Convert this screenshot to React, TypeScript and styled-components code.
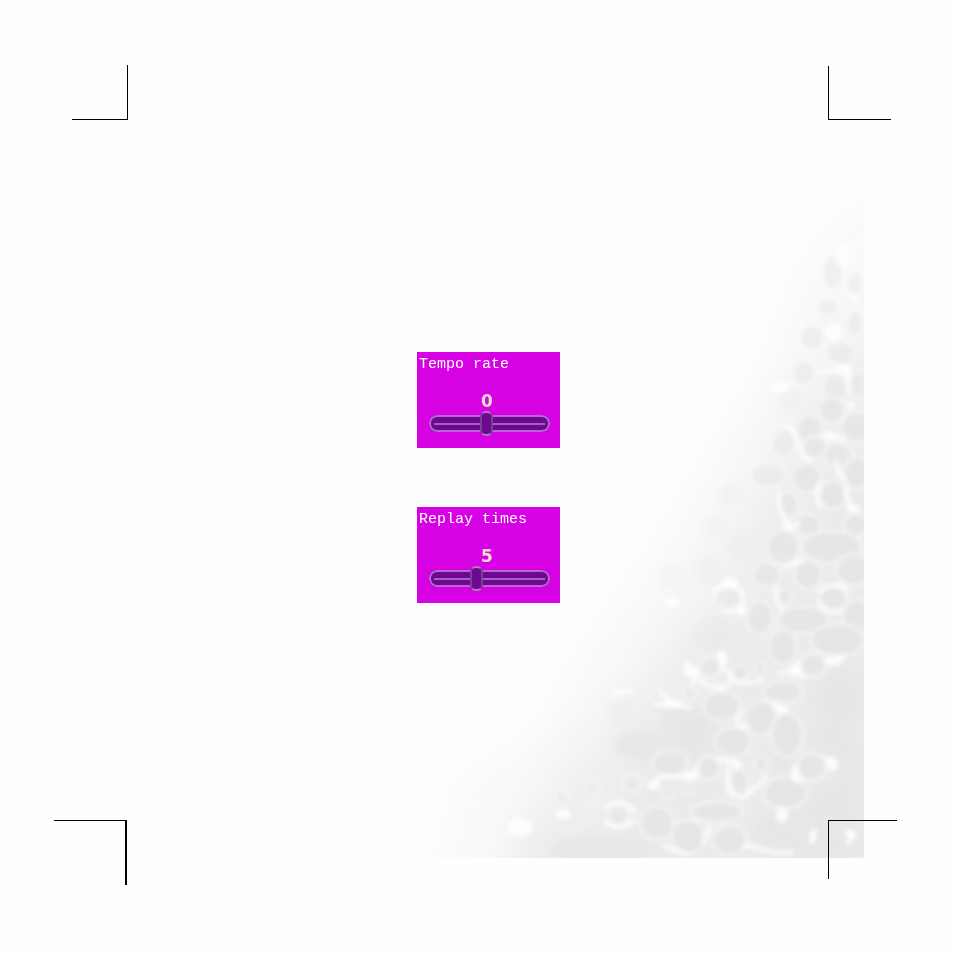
import React, { useState } from "react";
import styled, { createGlobalStyle } from "styled-components";

const GlobalStyle = createGlobalStyle`
  *, *::before, *::after { box-sizing: border-box; }
  body { margin: 0; background: #fefefe; }
`;

const Page = styled.div`
  position: relative;
  display: flex;
  flex-direction: column;
  min-height: 100vh;
  overflow: hidden;
  background: #fefefe;
`;

const Backdrop = styled.svg`
  position: absolute;
  right: 90px;
  bottom: 96px;
  width: 464px;
  height: 688px;
`;

const MarkRow = styled.div<{ $edge: "top" | "bottom" }>`
  position: relative;
  display: flex;
  justify-content: space-between;
  align-items: ${(p) => (p.$edge === "top" ? "flex-end" : "flex-start")};
  padding: ${(p) => (p.$edge === "top" ? "65px 63px 0 72px" : "0 57px 69px 54px")};
`;

const CropMark = styled.span<{
  $h: "top" | "bottom";
  $v: "left" | "right";
  $width: number;
  $height: number;
  $stroke?: number;
}>`
  width: ${(p) => p.$width}px;
  height: ${(p) => p.$height}px;
  border: 0 solid #000;
  border-${(p) => p.$h}-width: 1px;
  border-${(p) => p.$v}-width: ${(p) => p.$stroke ?? 1}px;
`;

const Main = styled.main`
  position: relative;
  flex: 1;
  display: flex;
  flex-direction: column;
  align-items: center;
  justify-content: center;
  gap: 59px;
  padding: 15px 0 0 23px;
`;

const Panel = styled.section`
  display: flex;
  flex-direction: column;
  padding: 4px 0 12px;
  background: #d602e4;
`;

const Title = styled.label`
  padding-left: 2px;
  color: #fff;
  font: 15px/18px "Liberation Mono", monospace;
`;

const Value = styled.output`
  margin: 17px 3px 0 0;
  color: #f0dfcf;
  text-align: center;
  font: bold 17px/20px "DejaVu Sans", sans-serif;
`;

const Slider = styled.input`
  appearance: none;
  display: block;
  width: 121px;
  height: 25px;
  margin: 0 10px 0 12px;
  background: transparent;
  cursor: pointer;

  &::-webkit-slider-runnable-track {
    height: 17px;
    border-radius: 8px;
    background: linear-gradient(#a85cc4, #a85cc4) center / calc(100% - 10px) 2px no-repeat #6b0a91;
    box-shadow: inset 0 0 0 2px #b766d2;
  }

  &::-webkit-slider-thumb {
    appearance: none;
    width: 13px;
    height: 25px;
    margin-top: -4px;
    border: 2px solid #7a3f92;
    border-top-color: #b17abf;
    border-bottom-color: #b17abf;
    border-radius: 6px;
    background: #6b0a91;
  }
`;

type SettingProps = { id: string; title: string; initial: number; min: number; max: number };

function Setting({ id, title, initial, min, max }: SettingProps) {
  const [value, setValue] = useState(initial);
  return (
    <Panel>
      <Title htmlFor={id}>{title}</Title>
      <Value htmlFor={id}>{value}</Value>
      <Slider
        id={id}
        type="range"
        min={min}
        max={max}
        value={value}
        onChange={(e) => setValue(Number(e.target.value))}
      />
    </Panel>
  );
}

// Each cell: centre x, centre y, radius x, radius y.
const cells = [
  [832, 410, 13, 13], [857, 427, 16, 15], [810, 430, 13, 15], [815, 447, 12, 11],
  [838, 455, 14, 12], [857, 473, 13, 16], [807, 478, 14, 15], [833, 495, 13, 14],
  [788, 505, 10, 13], [808, 525, 13, 11], [856, 525, 12, 12], [783, 547, 16, 17],
  [832, 547, 30, 16], [853, 570, 17, 16], [808, 575, 14, 15], [767, 575, 14, 12],
  [833, 599, 14, 13], [785, 597, 7, 8], [760, 618, 13, 17], [803, 620, 25, 14],
  [857, 617, 15, 18], [783, 647, 14, 18], [838, 640, 27, 16], [813, 665, 13, 12],
  [740, 673, 8, 8], [760, 669, 6, 6], [710, 667, 10, 10], [783, 692, 20, 11],
  [761, 718, 16, 17], [733, 742, 18, 15], [722, 706, 19, 15], [670, 763, 18, 13],
  [709, 768, 11, 12], [761, 764, 7, 8], [740, 782, 9, 14], [812, 767, 15, 14],
  [785, 793, 22, 16], [688, 837, 17, 17], [717, 812, 26, 10], [657, 823, 17, 17],
  [730, 840, 17, 15], [787, 735, 16, 22],
];

// Broad areas where neighbouring cells run together.
const masses = [
  [840, 700, 28, 34], [832, 737, 24, 20], [830, 808, 36, 26], [780, 829, 26, 20],
  [848, 770, 16, 40], [820, 846, 44, 16], [690, 722, 30, 18], [690, 745, 34, 16],
  [600, 850, 50, 14], [640, 745, 26, 14], [782, 762, 10, 15],
];

const paleCells = [
  [840, 353, 15, 12], [855, 323, 9, 14], [828, 307, 12, 9], [812, 337, 13, 13],
  [835, 388, 13, 15], [858, 385, 9, 14], [803, 373, 12, 13], [833, 273, 11, 18],
  [855, 283, 9, 12], [783, 443, 12, 15], [768, 475, 18, 13], [728, 598, 14, 11],
  [618, 815, 11, 11], [593, 788, 7, 7], [562, 797, 7, 7], [592, 805, 4, 4],
  [632, 783, 9, 9], [690, 693, 7, 7], [687, 790, 5, 5], [667, 793, 6, 6],
];

const faintCells = [
  [730, 495, 11, 12], [715, 528, 10, 10], [710, 570, 14, 14], [715, 635, 22, 16],
  [620, 712, 12, 12], [740, 545, 16, 14], [670, 575, 12, 12], [790, 400, 12, 12],
];

const webbing =
  "M786 425Q797 430 801 455L809 460 M820 437Q832 430 844 441 M836 461Q838 475 844 479 M819 483Q814 500 821 508 M847 488Q845 504 858 510 M778 492Q780 518 791 527L799 524 M801 559L786 568 M820 592Q824 584 842 585L847 592 M818 601Q826 614 841 611 M776 588Q774 602 782 609 M714 591Q729 580 740 589Q747 600 738 612L724 612 M720 653Q727 660 723 669L733 678L721 691 M735 682L750 683L763 680 M778 674L794 671L799 661 M798 670L803 678 M826 661L843 656L836 665 M774 703L781 712L788 708 M740 712L737 724L746 727 M655 704L678 706 M685 662L697 672L693 682 M649 787L662 776L688 777L697 769 M718 759L736 762 M729 765Q725 780 730 794L744 798L756 787L766 777 M794 767L799 782 M827 758L834 768 M710 827L704 842 M815 832L811 841 M846 832L853 837L848 844 M665 847L688 854 M745 845L776 853L792 852 M818 372L838 369L847 366L849 389 M606 807Q620 796 635 811 M605 821Q619 834 634 820 M849 296L858 302 M614 694L632 690 M660 690Q668 704 690 708 M700 679Q708 690 721 686";

const glints = [
  [830, 437, 5, 4], [851, 405, 4, 4], [852, 508, 6, 4], [788, 527, 6, 3],
  [722, 658, 5, 7], [690, 671, 7, 6], [795, 671, 6, 6], [830, 662, 5, 4],
  [781, 709, 6, 4], [673, 704, 10, 4], [691, 776, 7, 5], [654, 785, 6, 5],
  [795, 775, 4, 7], [832, 764, 6, 7], [782, 815, 6, 8], [851, 835, 5, 5],
  [834, 332, 9, 8], [844, 370, 8, 5], [730, 582, 8, 5], [672, 603, 8, 5],
  [563, 814, 8, 5], [520, 827, 13, 9], [780, 387, 10, 6], [843, 257, 6, 12],
  [737, 765, 5, 4], [813, 836, 3, 7], [742, 610, 4, 6],
];

type BlobsProps = { data: number[][]; fill: string; stroke?: string; opacity?: number };

const Blobs = ({ data, fill, stroke, opacity = 1 }: BlobsProps) => (
  <g fill={fill} stroke={stroke} strokeWidth={stroke ? 3 : undefined} opacity={opacity}>
    {data.map(([cx, cy, rx, ry]) => (
      <ellipse key={`${cx}-${cy}`} cx={cx} cy={cy} rx={rx} ry={ry} />
    ))}
  </g>
);

const Bubbles = () => (
  <Backdrop viewBox="400 170 464 688" aria-hidden="true">
    <defs>
      <filter id="haze" x="-30%" y="-30%" width="160%" height="160%">
        <feGaussianBlur stdDeviation="16" />
      </filter>
      <filter id="cloud" x="-20%" y="-20%" width="140%" height="140%">
        <feGaussianBlur stdDeviation="4" />
      </filter>
      <filter id="soft" x="-10%" y="-10%" width="120%" height="120%">
        <feGaussianBlur stdDeviation="2" />
      </filter>
    </defs>
    <g filter="url(#haze)">
      <path fill="#fafafa" d="M920 190L850 205L795 265L765 350L705 450L650 545L575 650L535 730L455 775L425 900H920Z" />
      <path fill="#f5f5f5" d="M920 270L825 300L775 400L725 490L670 590L620 670L545 750L500 830V900H920Z" />
      <path fill="#eeeeee" d="M920 330L850 350L800 420L755 510L725 590L670 650L610 735L560 790L500 870V900H920Z" />
      <path fill="#ebebeb" d="M920 420L820 480L760 620L690 710L640 745L610 830L520 870V920H920Z" />
    </g>
    <g filter="url(#cloud)">
      <Blobs data={faintCells} fill="#e4e4e4" opacity={0.22} />
      <Blobs data={masses} fill="#e7e7e7" />
    </g>
    <g filter="url(#soft)">
      <Blobs data={paleCells} fill="#e4e4e4" stroke="#fcfcfc" opacity={0.45} />
      <Blobs data={cells} fill="#e6e6e6" stroke="#f4f4f4" opacity={0.9} />
      <path d={webbing} fill="none" stroke="#fff" strokeWidth="4" strokeLinecap="round" strokeLinejoin="round" opacity="0.8" />
      <Blobs data={glints} fill="#fff" opacity={0.8} />
    </g>
  </Backdrop>
);

export default function App() {
  return (
    <Page>
      <GlobalStyle />
      <Bubbles />
      <MarkRow $edge="top">
        <CropMark $h="bottom" $v="right" $width={56} $height={55} />
        <CropMark $h="bottom" $v="left" $width={63} $height={54} />
      </MarkRow>
      <Main>
        <Setting id="tempo-rate" title="Tempo rate" initial={0} min={-10} max={11} />
        <Setting id="replay-times" title="Replay times" initial={5} min={2} max={10} />
      </Main>
      <MarkRow $edge="bottom">
        <CropMark $h="top" $v="right" $width={73} $height={65} $stroke={2} />
        <CropMark $h="top" $v="left" $width={69} $height={59} />
      </MarkRow>
    </Page>
  );
}
